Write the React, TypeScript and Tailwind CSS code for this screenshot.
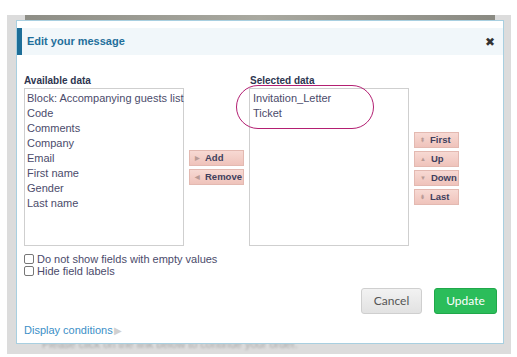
const available = [
  "Block: Accompanying guests list",
  "Code",
  "Comments",
  "Company",
  "Email",
  "First name",
  "Gender",
  "Last name",
];

const selected = ["Invitation_Letter", "Ticket"];

const SmallButton = ({ label, icon }: { label: string; icon: string }) => (
  <button className="flex h-[16px] w-full items-center gap-[5px] border border-[#e3b9b1] bg-gradient-to-b from-[#f7d9d3] to-[#efc3bb] pl-[5px] text-[9.5px] font-bold leading-none text-[#3f3f5e]">
    <span className="text-[6px] text-[#b89a95]">{icon}</span>
    {label}
  </button>
);

export default function App() {
  return (
    <div className="h-[357px] w-[517px] overflow-hidden bg-white px-[7px] pt-[15px] font-['Liberation_Sans',Arial,sans-serif]">
      <div className="h-[339px] w-[504px] bg-[#dcdcdc]">
        <div className="ml-[18px] h-[5px] w-[470px] bg-gradient-to-r from-[#8e8e86] via-[#a9a9a0] to-[#8a8a82]" />
        <div className="relative z-10 ml-[9px] flex h-[324px] w-[488px] flex-col border border-[#a8cfe0] bg-white">
          <div className="mt-[7px] flex h-[27px] items-center bg-[#f1f7fa]">
            <div className="h-full w-[5px] bg-[#1d6e98]" />
            <span className="ml-[5px] text-[11px] font-bold text-[#1f6f9b]">Edit your message</span>
            <span className="ml-auto mr-[8px] text-[12px] leading-none text-[#333]">✖</span>
          </div>

          <div className="mt-[20px] flex pl-[7px]">
            <div className="w-[160px]">
              <div className="h-[12px] text-[10px] font-bold leading-[12px] text-[#2d3550]">Available data</div>
              <div className="mt-[1px] h-[158px] border border-[#cfcfcf] px-[2px] pt-[2px] text-[11px] leading-[15px] text-[#4b4b6b]">
                {available.map((item) => (
                  <div key={item} className="whitespace-nowrap">
                    {item}
                  </div>
                ))}
              </div>
            </div>

            <div className="ml-[5px] mt-[75px] flex w-[55px] flex-col gap-[3px]">
              <SmallButton label="Add" icon="▶" />
              <SmallButton label="Remove" icon="◀" />
            </div>

            <div className="relative ml-[5px] w-[160px]">
              <div className="ml-[1px] h-[12px] text-[10px] font-bold leading-[12px] text-[#2d3550]">Selected data</div>
              <div className="mt-[1px] h-[158px] border border-[#cfcfcf] px-[3px] pt-[2px] text-[11px] leading-[15px] text-[#4b4b6b]">
                {selected.map((item) => (
                  <div key={item}>{item}</div>
                ))}
              </div>
              <div className="absolute left-[-13px] top-[10px] h-[44px] w-[138px] rounded-[22px] border-[1.5px] border-[#b31f72]" />
            </div>

            <div className="ml-[5px] mt-[57px] flex w-[45px] flex-col gap-[3px]">
              <SmallButton label="First" icon="⇞" />
              <SmallButton label="Up" icon="▲" />
              <SmallButton label="Down" icon="▼" />
              <SmallButton label="Last" icon="⇟" />
            </div>
          </div>

          <div className="mt-[8px] flex flex-col gap-[2px] pl-[7px] text-[11px] leading-[10px] text-[#4b4b6b]">
            <label className="flex items-center gap-[3px]">
              <span className="h-[10px] w-[10px] rounded-[2px] border border-[#777] bg-white" />
              Do not show fields with empty values
            </label>
            <label className="flex items-center gap-[3px]">
              <span className="h-[10px] w-[10px] rounded-[2px] border border-[#777] bg-white" />
              Hide field labels
            </label>
          </div>

          <div className="mt-[12px] flex justify-end gap-[12px] pr-[6px] font-['Lato',sans-serif] text-[12px]">
            <button className="h-[26px] w-[61px] rounded-[3px] border border-[#cfcfcf] bg-gradient-to-b from-[#f2f2f2] to-[#e2e2e2] text-[#555]">
              Cancel
            </button>
            <button className="h-[26px] w-[63px] rounded-[3px] border border-[#20a84a] bg-[#2bbd5a] text-white">
              Update
            </button>
          </div>

          <div className="mt-[8px] flex items-center pl-[7px] text-[11px] text-[#3b8fc7]">
            Display conditions
            <span className="ml-[1px] text-[10px] text-[#d0d0d0]">▶</span>
          </div>
        </div>
        <div className="ml-[35px] mt-[-5px] text-[11px] leading-[11px] text-[#a8a8a8] blur-[0.8px]">
          Please click on the link below to continue your order.
        </div>
      </div>
    </div>
  );
}
